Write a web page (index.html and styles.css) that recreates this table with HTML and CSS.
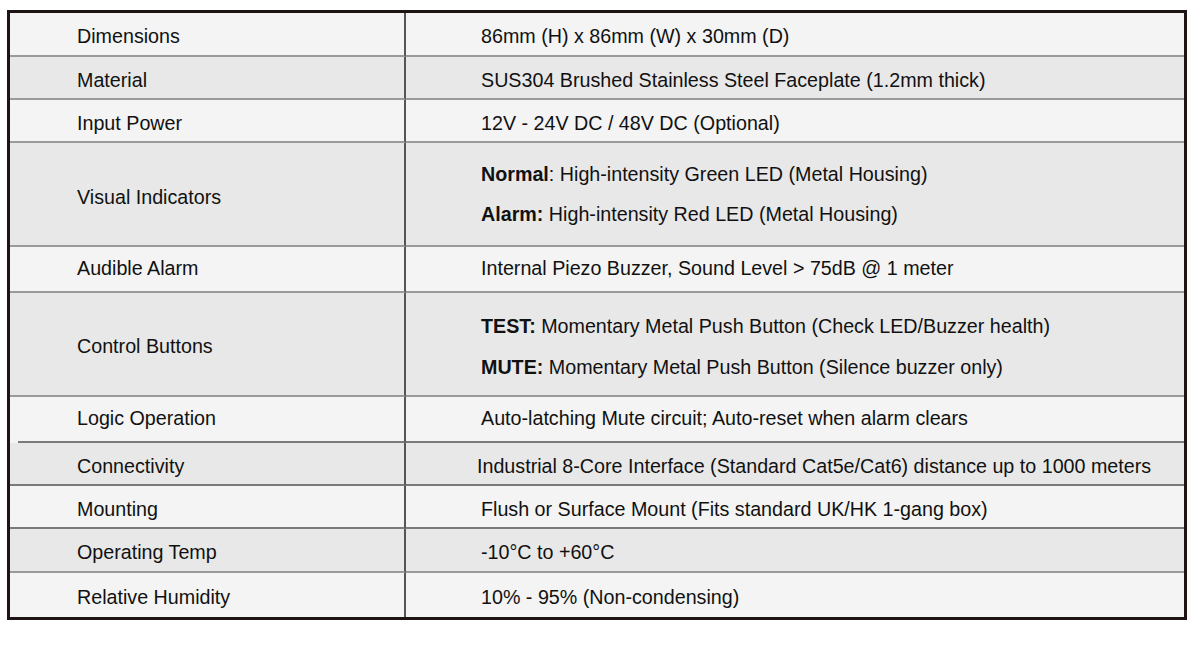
FILE: index.html
```html
<!DOCTYPE html>
<html>
<head>
<meta charset="utf-8">
<link rel="stylesheet" href="styles.css">
</head>
<body>
<div class="spec">
  <div class="row light h44">
    <div class="label">Dimensions</div>
    <div class="value">86mm (H) x 86mm (W) x 30mm (D)</div>
  </div>
  <div class="row gray h43">
    <div class="label">Material</div>
    <div class="value">SUS304 Brushed Stainless Steel Faceplate (1.2mm thick)</div>
  </div>
  <div class="row light h43">
    <div class="label">Input Power</div>
    <div class="value">12V - 24V DC / 48V DC (Optional)</div>
  </div>
  <div class="row gray h104">
    <div class="label low">Visual Indicators</div>
    <div class="value multi">
      <div class="line"><b>Normal</b>: High-intensity Green LED (Metal Housing)</div>
      <div class="line"><b>Alarm:</b> High-intensity Red LED (Metal Housing)</div>
    </div>
  </div>
  <div class="row light h46">
    <div class="label">Audible Alarm</div>
    <div class="value">Internal Piezo Buzzer, Sound Level &gt; 75dB @ 1 meter</div>
  </div>
  <div class="row gray h104">
    <div class="label">Control Buttons</div>
    <div class="value multi lower">
      <div class="line"><b>TEST:</b> Momentary Metal Push Button (Check LED/Buzzer health)</div>
      <div class="line"><b>MUTE:</b> Momentary Metal Push Button (Silence buzzer only)</div>
    </div>
  </div>
  <div class="row light h46 dark-line">
    <div class="label indent-line">Logic Operation</div>
    <div class="value">Auto-latching Mute circuit; Auto-reset when alarm clears</div>
  </div>
  <div class="row gray h43 dark-line">
    <div class="label">Connectivity</div>
    <div class="value shifted">Industrial 8-Core Interface (Standard Cat5e/Cat6) distance up to 1000 meters</div>
  </div>
  <div class="row light h43 dark-line">
    <div class="label">Mounting</div>
    <div class="value">Flush or Surface Mount (Fits standard UK/HK 1-gang box)</div>
  </div>
  <div class="row gray h44">
    <div class="label">Operating Temp</div>
    <div class="value">-10°C to +60°C</div>
  </div>
  <div class="row light h44 last">
    <div class="label">Relative Humidity</div>
    <div class="value">10% - 95% (Non-condensing)</div>
  </div>
</div>
</body>
</html>
```

FILE: styles.css
```css
* { box-sizing: border-box; }

html, body {
  margin: 0;
  padding: 0;
  background: #ffffff;
}

body {
  font-family: "Liberation Sans", Arial, sans-serif;
  font-size: 19.7px;
  color: #111111;
}

.spec {
  margin: 10px 0 0 7px;
  width: 1180px;
  border: 3px solid #1e1414;
  display: flex;
  flex-direction: column;
}

.row {
  display: grid;
  grid-template-columns: 396px 1fr;
}

.light { background: #f3f4f3; }
.gray { background: #e8e8e8; }

.h43 { height: 43px; }
.h44 { height: 44px; }
.h46 { height: 46px; }
.h104 { height: 104px; }

.label,
.value {
  display: flex;
  flex-direction: column;
  justify-content: center;
  padding-top: 4px;
  border-bottom: 2px solid #9a9a9a;
  line-height: 22px;
  white-space: nowrap;
}

.h46 .label,
.h46 .value {
  padding-top: 0;
  padding-bottom: 2px;
}

.dark-line .label,
.dark-line .value {
  border-bottom-color: #7a7a7a;
}

.last .label,
.last .value {
  border-bottom: none;
}

.label {
  padding-left: 67px;
  border-right: 2px solid #555555;
}

.label.low {
  padding-top: 6px;
}

.value {
  padding-left: 75px;
}

.value.shifted {
  padding-left: 71px;
}

.value.multi {
  gap: 18px;
  padding-top: 0;
}

.value.multi.lower {
  gap: 19px;
  padding-top: 5px;
}

.indent-line {
  border-bottom-color: transparent !important;
  background: linear-gradient(#7a7a7a, #7a7a7a) 8px 100% / calc(100% - 8px) 2px no-repeat;
  background-origin: border-box;
}

b { font-weight: bold; }
```
